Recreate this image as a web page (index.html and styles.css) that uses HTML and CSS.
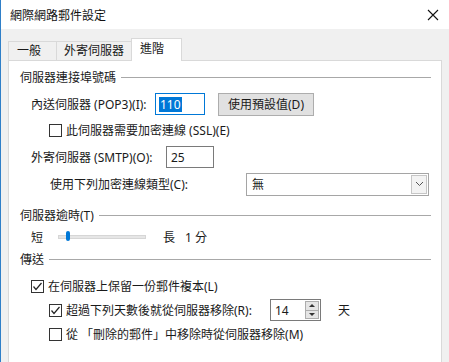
FILE: index.html
```html
<!DOCTYPE html>
<html lang="zh-Hant">
<head>
  <meta charset="UTF-8" />
  <title>網際網路郵件設定</title>
  <link rel="stylesheet" href="styles.css">
</head>
<body>
  <div class="window">

    <!-- TITLE BAR -->
    <div class="titlebar">
      <span class="title">網際網路郵件設定</span>
      <svg class="close" width="12" height="12" viewBox="0 0 12 12">
        <path d="M1 1 L11 11 M11 1 L1 11" stroke="#111" stroke-width="1.1" fill="none"/>
      </svg>
    </div>

    <div class="body">
      <!-- TABS -->
      <div class="tabs">
        <div class="tab">一般</div>
        <div class="tab">外寄伺服器</div>
        <div class="tab active">進階</div>
      </div>

      <!-- PANEL -->
      <div class="panel">
        <div class="group-head"><span>伺服器連接埠號碼</span></div>

        <div class="row row-pop">
          <span class="label lbl-pop">內送伺服器 (POP3)(I):</span>
          <div class="input focus w-pop"><span class="sel">110</span></div>
          <button class="btn">使用預設值(D)</button>
        </div>

        <div class="row row-ssl indent2">
          <span class="cb"></span>
          <span>此伺服器需要加密連線 (SSL)(E)</span>
        </div>

        <div class="row row-smtp">
          <span class="label lbl-smtp">外寄伺服器 (SMTP)(O):</span>
          <div class="input w-smtp">25</div>
        </div>

        <div class="row row-enc">
          <span class="label lbl-enc">使用下列加密連線類型(C):</span>
          <div class="select">
            <span>無</span>
            <span class="drop">
              <svg width="9" height="6" viewBox="0 0 9 6"><path d="M1 1 L4.5 4.5 L8 1" stroke="#555" fill="none"/></svg>
            </span>
          </div>
        </div>

        <div class="group-head head-timeout"><span>伺服器逾時(T)</span></div>

        <div class="row row-slider">
          <span>短</span>
          <div class="track"><span class="thumb"></span></div>
          <span class="long">長</span>
          <span class="mins">1 分</span>
        </div>

        <div class="group-head head-send"><span>傳送</span></div>

        <div class="row row-keep">
          <span class="cb checked"><svg width="11" height="11" viewBox="0 0 11 11"><path d="M1.5 5.5 L4 8.5 L9.5 2" stroke="#222" stroke-width="1.2" fill="none"/></svg></span>
          <span>在伺服器上保留一份郵件複本(L)</span>
        </div>

        <div class="row row-days indent2">
          <span class="cb checked"><svg width="11" height="11" viewBox="0 0 11 11"><path d="M1.5 5.5 L4 8.5 L9.5 2" stroke="#222" stroke-width="1.2" fill="none"/></svg></span>
          <span class="lbl-days">超過下列天數後就從伺服器移除(R):</span>
          <div class="spin">
            <span class="spin-val">14</span>
            <span class="spin-btns">
              <span class="up"></span>
              <span class="down"></span>
            </span>
          </div>
          <span class="day">天</span>
        </div>

        <div class="row row-del indent2">
          <span class="cb"></span>
          <span>從 「刪除的郵件」中移除時從伺服器移除(M)</span>
        </div>
      </div>
    </div>
  </div>
</body>
</html>
```

FILE: styles.css
```css
/* Reset and base */
* {
  box-sizing: border-box;
  margin: 0;
  padding: 0;
}

body {
  font-family: "Segoe UI", "Noto Sans", "Noto Sans CJK TC", sans-serif;
  font-size: 12px;
  color: #1a1a1a;
  background: #f0f0f0;
  overflow: hidden;
}

.window {
  width: 449px;
  height: 362px;
  border-left: 1px solid #2f7fc8;
  overflow: hidden;
}

/* TITLE BAR */
.titlebar {
  height: 29px;
  background: #fff;
  display: flex;
  align-items: center;
  justify-content: space-between;
  padding: 0 10px 0 9px;
}

.title {
  font-size: 12px;
  color: #111;
}

/* BODY */
.body {
  background: #f0f0f0;
  padding: 0 7px 0 7px;
  height: 333px;
}

.tabs {
  display: flex;
  align-items: flex-end;
  height: 31px;
}

.tab {
  height: 19px;
  line-height: 17px;
  padding: 0 7px;
  border: 1px solid #d9d9d9;
  border-bottom: none;
  background: #f0f0f0;
  margin-right: -1px;
}

.tab:first-child {
  padding: 0 15px 0 8px;
}

.tab.active {
  height: 23px;
  line-height: 19px;
  background: #fff;
  padding: 0 8px 0 8px;
  width: 51px;
  position: relative;
  margin-bottom: -1px;
  z-index: 1;
}

.panel {
  background: #fff;
  border: 1px solid #d9d9d9;
  height: 310px;
  padding: 0 10px 0 11px;
}

/* Group heading with line */
.group-head {
  display: flex;
  align-items: center;
  height: 18px;
  margin-top: 7px;
}

.group-head::after {
  content: "";
  flex: 1;
  height: 1px;
  background: #a8a8a8;
  margin-left: 5px;
}

.head-timeout { margin-top: 10px; }
.head-send { margin-top: 3px; }

/* Rows */
.row {
  display: flex;
  align-items: center;
  padding-left: 11px;
}

.indent2 { padding-left: 29px; }

.row-pop { height: 24px; margin-top: 6px; }
.row-ssl { height: 20px; margin-top: 4px; }
.row-smtp { height: 22px; margin-top: 6px; }
.row-enc { height: 24px; margin-top: 4px; padding-left: 30px; }
.row-slider { height: 20px; margin-top: 3px; }
.row-keep { height: 20px; margin-top: 8px; }
.row-days { height: 24px; margin-top: 2px; }
.row-del { height: 20px; margin-top: 2px; }

.lbl-pop { width: 124px; }
.lbl-smtp { width: 135px; }
.lbl-enc { width: 196px; }
.lbl-days { width: 204px; }

/* Inputs */
.input {
  height: 22px;
  border: 1px solid #7a7a7a;
  padding: 0 4px;
  display: flex;
  align-items: center;
  background: #fff;
}

.input.focus {
  border-color: #0078d7;
  padding-left: 3px;
}

.w-pop { width: 50px; }
.w-smtp { width: 48px; }

.sel {
  background: #0078d7;
  color: #fff;
  line-height: 15px;
  padding: 0 1px;
}

.btn {
  font: inherit;
  color: #1a1a1a;
  margin-left: 13px;
  width: 96px;
  height: 23px;
  background: #e1e1e1;
  border: 1px solid #adadad;
}

/* Checkbox */
.cb {
  width: 13px;
  height: 13px;
  border: 1px solid #333;
  background: #fff;
  margin-right: 4px;
  display: flex;
  align-items: center;
  justify-content: center;
}

.cb svg { display: block; }

/* Select */
.select {
  width: 183px;
  height: 23px;
  border: 1px solid #a5a5a5;
  display: flex;
  align-items: center;
  justify-content: space-between;
  padding: 0 1px 0 5px;
}

.drop {
  width: 16px;
  height: 19px;
  border: 1px solid #c6c6c6;
  background: #f3f3f3;
  display: flex;
  align-items: center;
  justify-content: center;
}

/* Slider */
.track {
  position: relative;
  width: 88px;
  height: 4px;
  margin-left: 15px;
  background: #e6e6e6;
  border: 1px solid #d6d6d6;
}

.thumb {
  position: absolute;
  left: 7px;
  top: -5px;
  width: 4px;
  height: 10px;
  background: #0078d7;
  border-radius: 2px;
}

.long { margin-left: 17px; }
.mins { margin-left: 10px; }

/* Spin box */
.spin {
  width: 51px;
  height: 22px;
  border: 1px solid #7a7a7a;
  display: flex;
  align-items: center;
  justify-content: space-between;
  padding: 0 1px 0 4px;
}

.spin-btns {
  width: 14px;
  height: 18px;
  display: flex;
  flex-direction: column;
  border: 1px solid #adadad;
  background: #e5e5e5;
}

.spin-btns span {
  flex: 1;
  display: flex;
  align-items: center;
  justify-content: center;
}

.spin-btns .up { border-bottom: 1px solid #adadad; }

.spin-btns .up::before {
  content: "";
  border-left: 3px solid transparent;
  border-right: 3px solid transparent;
  border-bottom: 3px solid #333;
}

.spin-btns .down::before {
  content: "";
  border-left: 3px solid transparent;
  border-right: 3px solid transparent;
  border-top: 3px solid #333;
}

.day { margin-left: 17px; }
```
